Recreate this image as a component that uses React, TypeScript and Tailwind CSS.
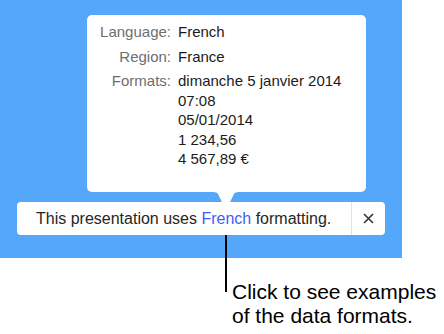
import React from 'react';

const font = { fontFamily: '"Liberation Sans", Arial, sans-serif' };

const rows: { label: string; values: string[] }[] = [
  { label: 'Language:', values: ['French'] },
  { label: 'Region:', values: ['France'] },
  {
    label: 'Formats:',
    values: ['dimanche 5 janvier 2014', '07:08', '05/01/2014', '1 234,56', '4 567,89 €'],
  },
];

const App: React.FC = () => {
  return (
    <div className="w-[444px] h-[334px] bg-white overflow-hidden" style={font}>
      {/* zone bleue avec le popover et la barre */}
      <div className="w-[402px] h-[258px] bg-[#55a8f9] pt-[15px] flex flex-col">
        <div className="relative ml-[87px] w-[279px] h-[177px] bg-white rounded-[5px] pl-[13px] pt-[7px]">
          <div className="flex flex-col gap-[5px] text-[15px] leading-[19.5px]">
            {rows.map((row) => (
              <div key={row.label} className="flex gap-[7px]">
                <div className="w-[71px] text-right text-[#6e6e6e]">{row.label}</div>
                <div className="flex flex-col text-[#1b1b1b]">
                  {row.values.map((v) => (
                    <span key={v}>{v}</span>
                  ))}
                </div>
              </div>
            ))}
          </div>
          {/* flèche du popover */}
          <svg
            className="absolute left-[121px] top-[176px]"
            width="36"
            height="20"
            viewBox="0 0 36 20"
          >
            <path d="M0 0 L0 1 C6 1 9 1 10 3 L18 19 L26 3 C27 1 30 1 36 1 L36 0 Z" fill="#ffffff" />
          </svg>
        </div>

        <div className="relative mt-[10px] ml-[17px] w-[368px] h-[33px] bg-white rounded-[4px] flex items-stretch">
          <div className="flex-1 flex items-center pl-[19px] text-[16px] text-[#262626]">
            <span>
              This presentation uses <span className="text-[#4160f0]">French</span> formatting.
            </span>
          </div>
          <div className="w-[34px] border-l border-[#e2e2e2] flex items-center justify-center">
            <svg width="11" height="11" viewBox="0 0 11 11">
              <path d="M1 1 L10 10 M10 1 L1 10" stroke="#333333" strokeWidth="1.6" />
            </svg>
          </div>
        </div>
      </div>

      {/* légende */}
      <div className="relative ml-[232px] mt-[22px] text-[21px] leading-[24px] text-black">
        <div className="absolute left-[-7px] top-[-45px] w-[2px] h-[57px] bg-black" />
        <p>Click to see examples</p>
        <p>of the data formats.</p>
      </div>
    </div>
  );
};

export default App;
